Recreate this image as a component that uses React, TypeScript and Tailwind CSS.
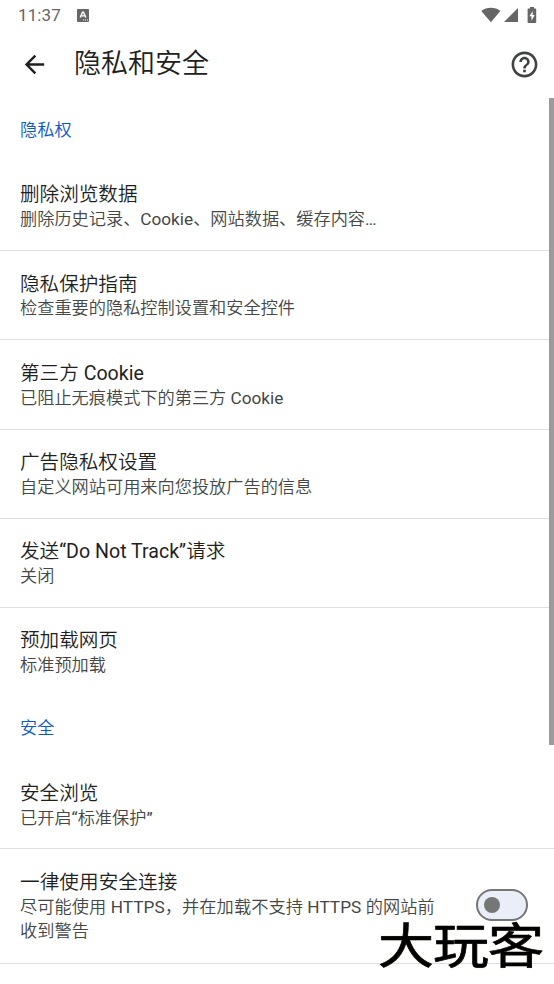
import React from 'react';

interface PreferenceItem {
  id: string;
  title: string;
  summary: string;
}

const privacyItems: PreferenceItem[] = [
  { id: 'clear-data', title: '删除浏览数据', summary: '删除历史记录、Cookie、网站数据、缓存内容…' },
  { id: 'guide', title: '隐私保护指南', summary: '检查重要的隐私控制设置和安全控件' },
  { id: 'cookies', title: '第三方 Cookie', summary: '已阻止无痕模式下的第三方 Cookie' },
  { id: 'ads', title: '广告隐私权设置', summary: '自定义网站可用来向您投放广告的信息' },
  { id: 'dnt', title: '发送“Do Not Track”请求', summary: '关闭' },
  { id: 'preload', title: '预加载网页', summary: '标准预加载' },
];

// Latin runs keep the regular weight, the Chinese text around them is set lighter
const MixedText: React.FC<{ text: string }> = ({ text }) => (
  <>
    {text.split(/([ A-Za-z“”…]+)/).map((part, i) =>
      i % 2 === 1 ? (
        <span key={i} className="font-normal">{part}</span>
      ) : (
        part
      )
    )}
  </>
);

const StatusBar: React.FC = () => (
  <div className="h-[30px] flex items-center justify-between pl-[18px] pr-[17.5px] text-[#666666]">
    <div className="flex items-center gap-[16px]">
      <span className="text-[17px] leading-[30px] font-normal tracking-[0.1px]">11:37</span>
      <svg width="12" height="13" viewBox="0 0 12 13">
        <rect width="12" height="13" rx="1" fill="currentColor" />
        <path d="M3.2 8.5 5.5 3.2h1L8.8 8.5M4.2 6.9h3.6" fill="none" stroke="#fff" strokeWidth="1.4" />
        <path d="M6 11h1M8 11h1M10 11h1" stroke="#fff" strokeWidth="1" />
      </svg>
    </div>
    <div className="flex items-center">
      <svg width="20" height="16" viewBox="0 0 20 16" fill="currentColor">
        <path d="M0.3 4C5.8-0.2 14-0.2 19.4 4L9.9 15.3z" />
      </svg>
      <svg className="ml-[3px]" width="14" height="14" viewBox="0 0 14 14" fill="currentColor">
        <path d="M14 0v14H0z" />
      </svg>
      <svg className="ml-[9px]" width="10" height="16" viewBox="0 0 10 16">
        <path d="M3 0h4v1.6h1.4q.8 0 .8.8v12.8q0 .8-.8.8H1.4q-.8 0-.8-.8V2.4q0-.8.8-.8H3z" fill="currentColor" />
        <path d="M5.8 4 2.4 9.3h2.1v4.4L7.7 8H5.6z" fill="#fff" />
      </svg>
    </div>
  </div>
);

const Toolbar: React.FC = () => (
  <header className="h-[68px] flex items-center pl-[20px] pr-[14px]">
    <svg className="shrink-0" width="29" height="29" viewBox="0 0 24 24" fill="#202020">
      <path d="M20 11H7.83l5.59-5.59L12 4l-8 8 8 8 1.41-1.41L7.83 13H20v-2z" />
    </svg>
    <h1 className="ml-[25px] flex-1 text-[27px] leading-[34px] text-[#202020]">隐私和安全</h1>
    <svg width="31" height="31" viewBox="0 0 24 24" fill="#404341">
      <path d="M11 18h2v-2h-2v2zm1-16C6.48 2 2 6.48 2 12s4.48 10 10 10 10-4.48 10-10S17.52 2 12 2zm0 18c-4.41 0-8-3.59-8-8s3.59-8 8-8 8 3.59 8 8-3.59 8-8 8zm0-14c-2.21 0-4 1.79-4 4h2c0-1.1.9-2 2-2s2 .9 2 2c0 2-3 1.75-3 5h2c0-2.25 3-2.5 3-5 0-2.21-1.79-4-4-4z" />
    </svg>
  </header>
);

const SectionTitle: React.FC<{ label: string }> = ({ label }) => (
  <h2 className="h-[63.2px] flex items-center pl-5 pt-[1px] text-[17.2px] text-[#0b57d0]">{label}</h2>
);

const PreferenceText: React.FC<{ title: string; summary: string }> = ({ title, summary }) => (
  <div>
    <div className="text-[19.6px] leading-[24.6px] text-[#1f1f1f]">
      <MixedText text={title} />
    </div>
    <div className="-mt-[0.9px] text-[17.2px] leading-[24.6px] text-[#444746]">
      <MixedText text={summary} />
    </div>
  </div>
);

const Preference: React.FC<{ item: PreferenceItem; divider?: boolean }> = ({ item, divider = true }) => (
  <div className={`h-[89.2px] px-5 pt-[21.5px] ${divider ? 'border-b border-[#dfdfdf]' : ''}`}>
    <PreferenceText title={item.title} summary={item.summary} />
  </div>
);

export default function App() {
  return (
    <div className="relative w-[554px] h-[984px] overflow-hidden bg-white font-[350] font-[Roboto,'Noto_Sans_CJK_SC',sans-serif]">
      <StatusBar />
      <Toolbar />

      <main className="pt-[0.8px]">
        <SectionTitle label="隐私权" />
        {privacyItems.map((item, i) => (
          <Preference key={item.id} item={item} divider={i < privacyItems.length - 1} />
        ))}

        <SectionTitle label="安全" />
        <Preference item={{ id: 'safe-browsing', title: '安全浏览', summary: '已开启“标准保护”' }} />

        <div className="h-[114.4px] flex pl-5 pr-[26px] pt-[21.5px] border-b border-[#dfdfdf]">
          <div className="w-[420px] tracking-[0.08px]">
            <PreferenceText
              title="一律使用安全连接"
              summary="尽可能使用 HTTPS，并在加载不支持 HTTPS 的网站前收到警告"
            />
          </div>
          <button
            role="switch"
            aria-checked="false"
            className="ml-auto mt-[18.4px] w-[52px] h-[32px] shrink-0 rounded-full border-2 border-[#747775] bg-[#e9eef9] flex items-center pl-[6px]"
          >
            <span className="size-[16px] rounded-full bg-[#747775]" />
          </button>
        </div>
      </main>

      {/* scroll indicator */}
      <div className="absolute right-0 top-[98px] w-[5px] h-[647px] bg-[#9b9b9b]" />

      {/* site watermark */}
      <div className="absolute left-[378px] top-[919px] text-[56px] leading-[56px] tracking-[-1px] font-normal text-black origin-center scale-y-[0.86] whitespace-nowrap [-webkit-text-stroke:0.8px_#000] [text-shadow:0_0_2px_#d8cfa8]">
        大玩客
      </div>
    </div>
  );
}
